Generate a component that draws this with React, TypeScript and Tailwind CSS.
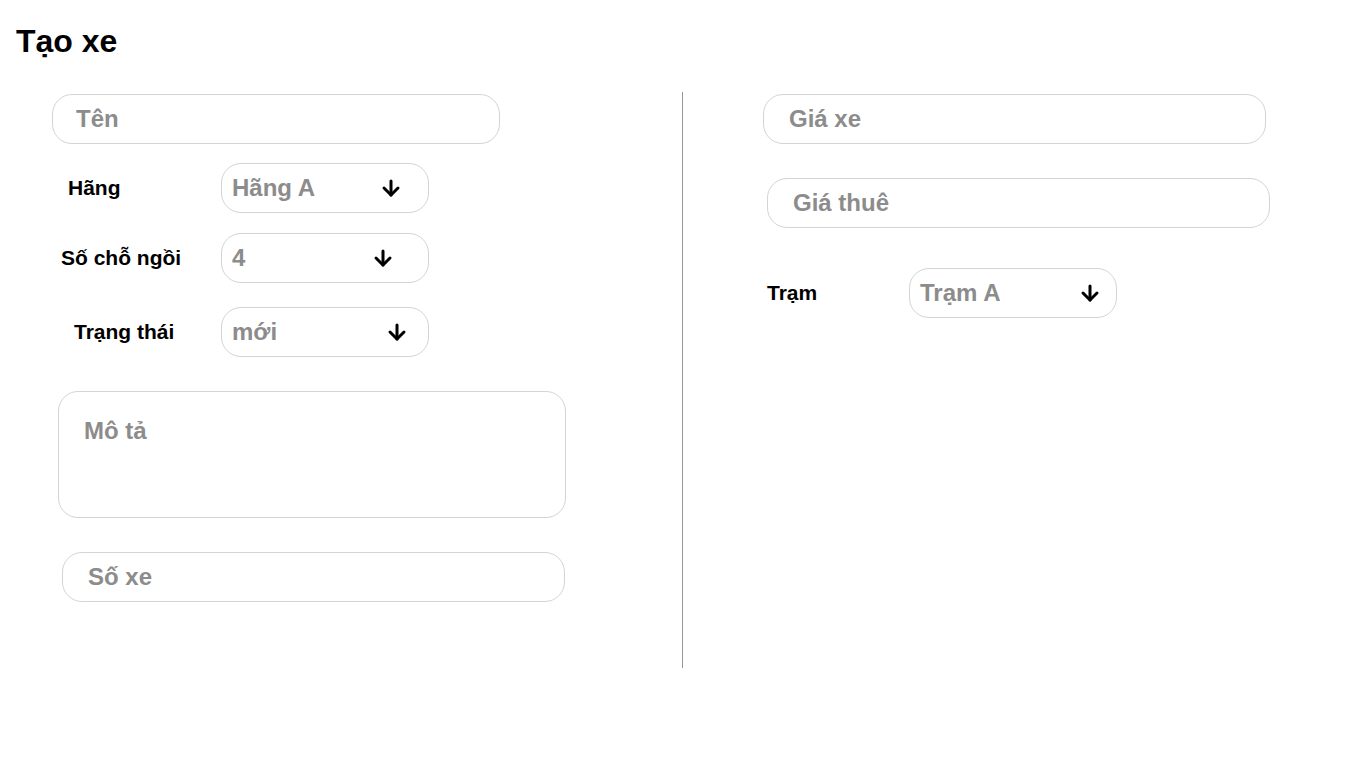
import { ArrowDown } from 'lucide-react';

const font = { fontFamily: '"Liberation Sans", Arial, sans-serif' };

interface FieldProps {
  placeholder: string;
  className: string;
}

function TextField({ placeholder, className }: FieldProps) {
  return (
    <input
      type="text"
      placeholder={placeholder}
      className={`h-[50px] rounded-[20px] border border-[#d4d4d4] text-[24px] font-bold text-[#8c8c8c] placeholder:text-[#8c8c8c] outline-none ${className}`}
    />
  );
}

export default function App() {
  return (
    <div className="h-[760px] w-[1366px] bg-white text-black" style={font}>
      <h1 className="pl-[16px] pt-[25px] text-[32px] font-bold leading-none">Tạo xe</h1>

      <div className="mt-[35px] flex">
        {/* cột trái */}
        <div className="flex w-[682px] flex-col pt-[2px]">
          <TextField placeholder="Tên" className="ml-[52px] w-[448px] pl-[23px]" />

          <div className="mt-[19px] flex items-center">
            <span className="ml-[68px] w-[153px] text-[21px] font-bold">Hãng</span>
            <div className="flex h-[50px] w-[208px] items-center rounded-[20px] border border-[#d4d4d4] pl-[10px]">
              <span className="w-[147px] text-[24px] font-bold text-[#8c8c8c]">Hãng A</span>
              <ArrowDown className="h-[24px] w-[24px]" strokeWidth={3} />
            </div>
          </div>

          <div className="mt-[20px] flex items-center">
            <span className="ml-[61px] w-[160px] text-[21px] font-bold">Số chỗ ngồi</span>
            <div className="flex h-[50px] w-[208px] items-center rounded-[20px] border border-[#d4d4d4] pl-[10px]">
              <span className="w-[139px] text-[24px] font-bold text-[#8c8c8c]">4</span>
              <ArrowDown className="h-[24px] w-[24px]" strokeWidth={3} />
            </div>
          </div>

          <div className="mt-[24px] flex items-center">
            <span className="ml-[74px] w-[147px] text-[21px] font-bold">Trạng thái</span>
            <div className="flex h-[50px] w-[208px] items-center rounded-[20px] border border-[#d4d4d4] pl-[10px]">
              <span className="w-[153px] text-[24px] font-bold text-[#8c8c8c]">mới</span>
              <ArrowDown className="h-[24px] w-[24px]" strokeWidth={3} />
            </div>
          </div>

          <textarea
            placeholder="Mô tả"
            className="ml-[58px] mt-[34px] h-[127px] w-[508px] resize-none rounded-[20px] border border-[#d4d4d4] pl-[25px] pt-[27px] text-[24px] font-bold leading-none text-[#8c8c8c] placeholder:text-[#8c8c8c] outline-none"
          />

          <TextField placeholder="Số xe" className="ml-[62px] mt-[34px] w-[503px] pl-[25px]" />
        </div>

        {/* đường chia */}
        <div className="h-[576px] w-px bg-[#999999]" />

        {/* cột phải */}
        <div className="flex flex-col pt-[2px]">
          <TextField placeholder="Giá xe" className="ml-[80px] w-[503px] pl-[25px]" />
          <TextField placeholder="Giá thuê" className="ml-[84px] mt-[34px] w-[503px] pl-[25px]" />

          <div className="mt-[40px] flex items-center">
            <span className="ml-[84px] w-[142px] text-[21px] font-bold">Trạm</span>
            <div className="flex h-[50px] w-[208px] items-center rounded-[20px] border border-[#d4d4d4] pl-[10px]">
              <span className="w-[158px] text-[24px] font-bold text-[#8c8c8c]">Trạm A</span>
              <ArrowDown className="h-[24px] w-[24px]" strokeWidth={3} />
            </div>
          </div>
        </div>
      </div>
    </div>
  );
}
